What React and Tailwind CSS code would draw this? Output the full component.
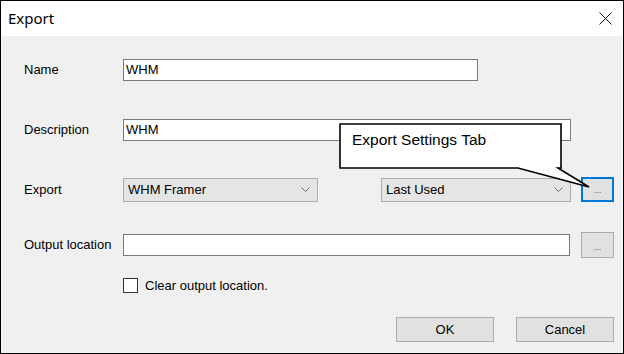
const FONT = { fontFamily: '"Liberation Sans", Arial, sans-serif' }

function Chevron() {
  return (
    <svg width="9" height="5" viewBox="0 0 9 5" className="shrink-0">
      <path d="M0.5 0.5 L4.5 4.5 L8.5 0.5" fill="none" stroke="#6d6d6d" strokeWidth="1" />
    </svg>
  )
}

function TextBox({ value, className }) {
  return (
    <div className={`h-[22px] bg-white border border-[#7a7a7a] flex items-center pl-[2px] text-[13px] text-black ${className}`}>
      {value}
    </div>
  )
}

function Combo({ value, className }) {
  return (
    <div className={`h-[24px] bg-[#e5e5e5] border border-[#adadad] flex items-center justify-between pl-[4px] pr-[7px] text-[13px] text-black ${className}`}>
      <span>{value}</span>
      <Chevron />
    </div>
  )
}

function Browse({ focused, className }) {
  return (
    <div
      className={`w-[33px] bg-[#e1e1e1] flex items-end justify-center pb-[5px] text-[9px] leading-none text-[#555] ${
        focused ? 'border-2 border-[#0078d7]' : 'border border-[#adadad]'
      } ${className}`}
    >
      ...
    </div>
  )
}

function Label({ children }) {
  return <div className="w-[99px] shrink-0 text-[13px] text-black">{children}</div>
}

export default function App() {
  return (
    <div className="relative w-[624px] h-[354px] border border-black flex flex-col bg-[#f0f0f0] overflow-hidden" style={FONT}>
      <div className="h-[35px] bg-white flex items-center justify-between pl-[7px] pr-[11px] shrink-0">
        <span className="text-[15px] text-black" style={{ fontFamily: '"Noto Sans", "Open Sans", sans-serif' }}>Export</span>
        <svg width="13" height="13" viewBox="0 0 13 13">
          <path d="M0.5 0.5 L12.5 12.5 M12.5 0.5 L0.5 12.5" stroke="#111" strokeWidth="1" />
        </svg>
      </div>

      <div className="flex flex-col pl-[23px]">
        <div className="flex items-center mt-[23px]">
          <Label>Name</Label>
          <TextBox value="WHM" className="w-[355px]" />
        </div>

        <div className="flex items-center mt-[38px]">
          <Label>Description</Label>
          <TextBox value="WHM" className="w-[448px]" />
        </div>

        <div className="flex items-center mt-[36px] h-[25px]">
          <Label>Export</Label>
          <Combo value="WHM Framer" className="w-[195px]" />
          <Combo value="Last Used" className="w-[190px] ml-[63px]" />
          <Browse focused className="h-[25px] ml-[10px]" />
        </div>

        <div className="flex items-center mt-[30px] h-[26px]">
          <Label>Output location</Label>
          <TextBox value="" className="w-[447px]" />
          <Browse className="h-[26px] ml-[11px]" />
        </div>

        <div className="flex items-center mt-[20px] ml-[99px] h-[15px]">
          <div className="w-[15px] h-[15px] bg-white border border-[#333]" />
          <span className="ml-[7px] text-[13px] text-black">Clear output location.</span>
        </div>

        <div className="flex justify-end mt-[24px] pr-[9px]">
          <div className="w-[98px] h-[25px] bg-[#e1e1e1] border border-[#adadad] flex items-center justify-center text-[13px] text-black">OK</div>
          <div className="w-[98px] h-[25px] ml-[22px] bg-[#e1e1e1] border border-[#adadad] flex items-center justify-center text-[13px] text-black">Cancel</div>
        </div>
      </div>

      {/* callout overlay */}
      <div className="absolute left-[337px] top-[121px] w-[260px] h-[70px]">
        <svg width="260" height="70" viewBox="0 0 260 70" className="absolute left-0 top-0">
          <path
            d="M2 2 H223 V46 H220 L251 65 L180 46 H2 Z"
            fill="#fff"
            stroke="#000"
            strokeWidth="1.6"
            strokeLinejoin="miter"
          />
        </svg>
        <div className="absolute left-[14px] top-[6px] text-[15.5px] text-black whitespace-nowrap">Export Settings Tab</div>
      </div>
    </div>
  )
}
